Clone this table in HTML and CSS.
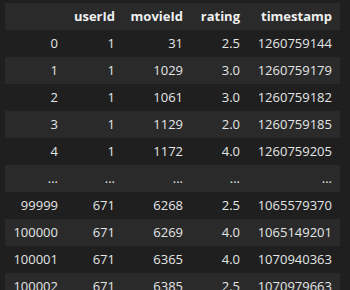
FILE: index.html
```html
<!DOCTYPE html>
<html>
<head>
<meta charset="utf-8">
<link rel="stylesheet" href="styles.css">
</head>
<body>
<table class="df">
  <colgroup>
    <col class="c-idx"><col class="c-user"><col class="c-movie"><col class="c-rating"><col class="c-ts">
  </colgroup>
  <thead>
    <tr><th></th><th>userId</th><th>movieId</th><th>rating</th><th>timestamp</th></tr>
  </thead>
  <tbody>
    <tr><th>0</th><td>1</td><td>31</td><td>2.5</td><td>1260759144</td></tr>
    <tr><th>1</th><td>1</td><td>1029</td><td>3.0</td><td>1260759179</td></tr>
    <tr><th>2</th><td>1</td><td>1061</td><td>3.0</td><td>1260759182</td></tr>
    <tr><th>3</th><td>1</td><td>1129</td><td>2.0</td><td>1260759185</td></tr>
    <tr><th>4</th><td>1</td><td>1172</td><td>4.0</td><td>1260759205</td></tr>
    <tr class="ell"><th>...</th><td>...</td><td>...</td><td>...</td><td>...</td></tr>
    <tr><th>99999</th><td>671</td><td>6268</td><td>2.5</td><td>1065579370</td></tr>
    <tr><th>100000</th><td>671</td><td>6269</td><td>4.0</td><td>1065149201</td></tr>
    <tr><th>100001</th><td>671</td><td>6365</td><td>4.0</td><td>1070940363</td></tr>
    <tr><th>100002</th><td>671</td><td>6385</td><td>2.5</td><td>1070979663</td></tr>
  </tbody>
</table>
</body>
</html>
```
FILE: styles.css
```css
html, body {
  margin: 0;
  background: #1f1f1f;
}
body {
  padding: 3px 5px;
  font-family: "Open Sans", "Noto Sans", sans-serif;
  font-size: 13px;
  color: #e3e6e6;
}
.df {
  border-collapse: collapse;
  table-layout: fixed;
  width: 335px;
}
.c-idx { width: 61px; }
.c-user { width: 57px; }
.c-movie { width: 68px; }
.c-rating { width: 57px; }
.c-ts { width: 92px; }
.df th, .df td {
  height: 27px;
  padding: 0 8px 0 0;
  text-align: right;
  vertical-align: middle;
  white-space: nowrap;
  line-height: 17px;
}
.df thead th {
  font-weight: 700;
  color: #eef0f0;
  background: #2a2a2a;
}
.df tbody th {
  font-weight: 400;
}
.df tbody tr:nth-child(even) {
  background: #2a2a2a;
}
```
